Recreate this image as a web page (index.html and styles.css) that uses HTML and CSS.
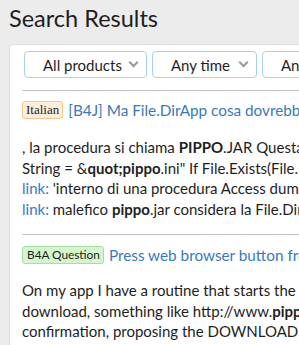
FILE: index.html
```html
<!DOCTYPE html>
<html lang="it">
  <head>
    <meta charset="UTF-8" />
    <meta name="viewport" content="width=device-width, initial-scale=1.0" />
    <title>Search Results</title>
    <link rel="stylesheet" href="styles.css">
  </head>
  <body>
    <h1 class="page-title">Search Results</h1>

    <div class="results-panel">
      <div class="filter-bar">
        <button class="filter-btn">All products <span class="chevron"></span></button>
        <button class="filter-btn">Any time <span class="chevron"></span></button>
        <button class="filter-btn">Any type <span class="chevron"></span></button>
      </div>

      <div class="result">
        <div class="result-head">
          <span class="tag tag-italian">Italian</span>
          <a class="result-title" href="#">[B4J] Ma File.DirApp cosa dovrebbe restituire?</a>
        </div>
        <div class="snippet">
          <div class="line">, la procedura si chiama <b>PIPPO</b>.JAR Questa procedura</div>
          <div class="line">String = &amp;<b>quot;pippo</b>.ini" If File.Exists(File.DirApp</div>
          <div class="line"><span class="snip-link">link:</span> 'interno di una procedura Access dump</div>
          <div class="line"><span class="snip-link">link:</span> malefico <b>pippo</b>.jar considera la File.DirApp</div>
        </div>
      </div>

      <div class="result">
        <div class="result-head">
          <span class="tag tag-question">B4A Question</span>
          <a class="result-title" href="#">Press web browser button from app</a>
        </div>
        <div class="snippet">
          <div class="line">On my app I have a routine that starts the</div>
          <div class="line">download, something like http://www.<b>pippo</b>.com</div>
          <div class="line">confirmation, proposing the DOWNLOAD button</div>
        </div>
      </div>
    </div>
  </body>
</html>
```

FILE: styles.css
```css
/* General */
body {
  margin: 0;
  padding: 0 0 0 9px;
  background: #ececec;
  font-family: Lato, "Open Sans", sans-serif;
  color: #1e1e1e;
  overflow: hidden;
}

.page-title {
  margin: 0;
  padding: 4px 0 0 0;
  height: 40px;
  font-size: 23.5px;
  font-weight: normal;
  color: #1e1e1e;
}

/* White panel */
.results-panel {
  width: 700px;
  background: #fff;
  border: 1px solid #dedede;
  border-radius: 4px 0 0 0;
  padding: 6px 0 0 12px;
  min-height: 400px;
}

/* Filters */
.filter-bar {
  display: flex;
  gap: 5px;
  padding-left: 2px;
}

.filter-btn {
  height: 27px;
  padding: 0 9px 0 18px;
  border: 1px solid #a9d0ec;
  border-radius: 4px;
  background: #fff;
  font-family: inherit;
  font-size: 15px;
  color: #1e1e1e;
  display: flex;
  align-items: center;
  justify-content: space-between;
}

.filter-btn:first-child {
  width: 123px;
}

.filter-btn:nth-child(2) {
  width: 105px;
}

.chevron {
  width: 5px;
  height: 5px;
  border-right: 2px solid #9a9a9a;
  border-bottom: 2px solid #9a9a9a;
  transform: rotate(45deg);
  margin-top: -4px;
}

/* Results */
.result {
  border-top: 1px solid #c4c4c4;
  margin-top: 12px;
  padding-top: 10px;
  width: 380px;
}

.result + .result {
  margin-top: 15px;
  padding-top: 11px;
}

.result-head {
  display: flex;
  align-items: center;
  gap: 5px;
  height: 18px;
  white-space: nowrap;
}

.tag {
  border-radius: 3px;
  padding: 0 3px;
  height: 16px;
  line-height: 16px;
  font-size: 12px;
}

.tag-italian {
  background: #fdefdc;
  border: 1px solid #f4c88c;
  font-family: "Liberation Serif", serif;
  font-size: 13px;
}

.tag-question {
  background: #d5f5cf;
  border: 1px solid #a6e09e;
  padding: 0 3px 0 4px;
  font-size: 11.8px;
}

.result-title {
  color: #3a79b9;
  font-size: 15.3px;
  text-decoration: none;
}

.snippet {
  margin-top: 18px;
  font-size: 15px;
  line-height: 20.5px;
}

.result + .result .snippet {
  margin-top: 16px;
}

.line {
  white-space: nowrap;
}

.snip-link {
  color: #3a79b9;
}
```
